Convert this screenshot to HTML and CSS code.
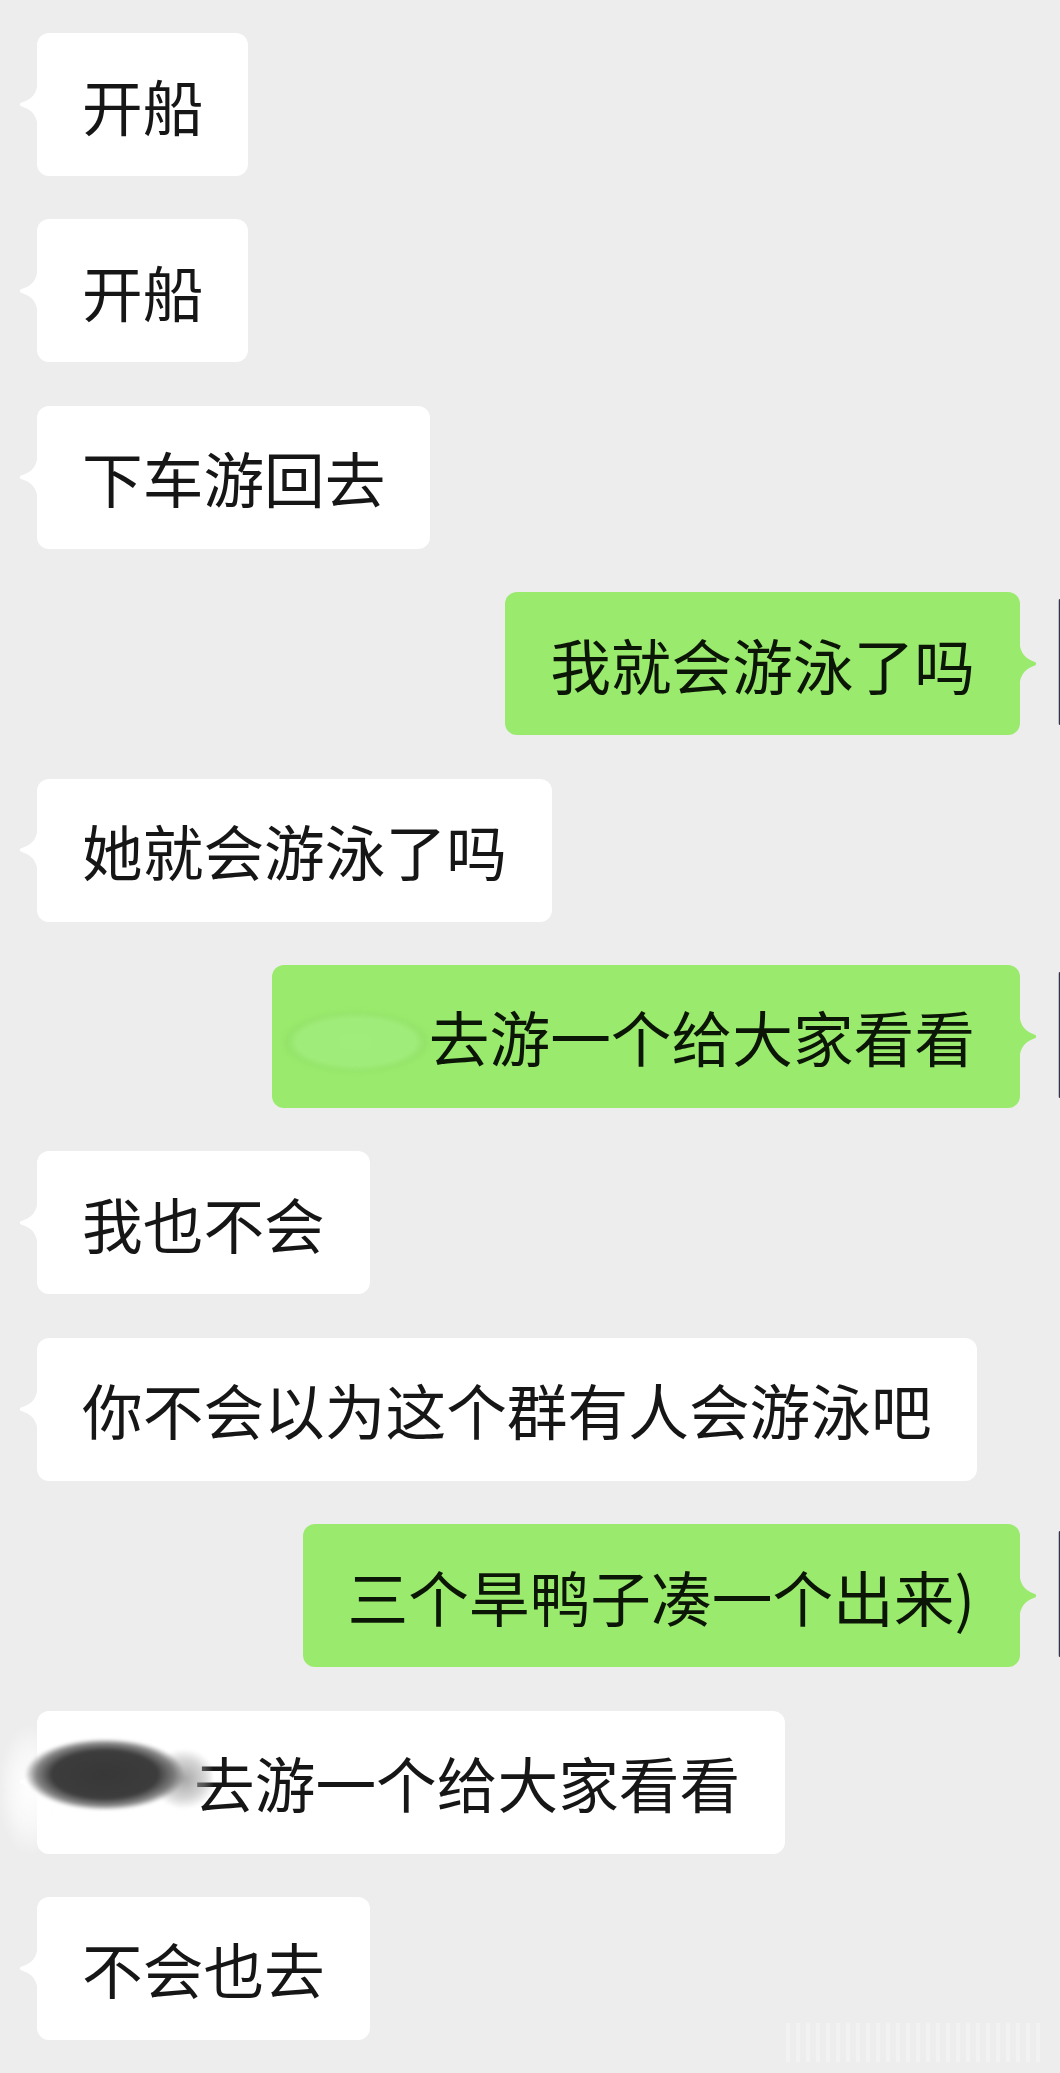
FILE: index.html
```html
<!DOCTYPE html>
<html lang="zh-CN">
<head>
    <meta charset="UTF-8">
    <meta name="viewport" content="width=device-width, initial-scale=1.0">
    <title>聊天记录</title>
    <link rel="stylesheet" href="styles.css">
</head>
<body>
    <div class="chat">
        <div class="row left"><div class="bubble">开船</div></div>
        <div class="row left"><div class="bubble">开船</div></div>
        <div class="row left"><div class="bubble">下车游回去</div></div>
        <div class="row right">
            <div class="bubble green">我就会游泳了吗</div>
            <div class="avatar"></div>
        </div>
        <div class="row left"><div class="bubble">她就会游泳了吗</div></div>
        <div class="row right">
            <div class="bubble green"><span class="masked light"></span>去游一个给大家看看</div>
            <div class="avatar"></div>
        </div>
        <div class="row left"><div class="bubble">我也不会</div></div>
        <div class="row left"><div class="bubble">你不会以为这个群有人会游泳吧</div></div>
        <div class="row right">
            <div class="bubble green">三个旱鸭子凑一个出来)</div>
            <div class="avatar"></div>
        </div>
        <div class="row left"><div class="bubble"><span class="masked dark"></span>去游一个给大家看看</div></div>
        <div class="row left"><div class="bubble">不会也去</div></div>
    </div>

    <!-- watermark in the bottom corner -->
    <div class="watermark"></div>
</body>
</html>
```

FILE: styles.css
```css
body {
    margin: 0;
    min-height: 2073px;
    position: relative;
    overflow: hidden;
    background-color: #ededed;
    font-family: "Noto Sans CJK SC", "Noto Sans", sans-serif;
}

.chat {
    display: flex;
    flex-direction: column;
    gap: 43.4px;
    padding: 33px 0 0 37px;
}

.row {
    display: flex;
}

.row.right {
    justify-content: flex-end;
}

.bubble {
    position: relative;
    background-color: #fff;
    color: #161616;
    border-radius: 12px;
    padding: 29.5px 45px;
    font-size: 60.7px;
    line-height: 84px;
    white-space: nowrap;
}

/* the little pointer on the side of each bubble */
.bubble::before {
    content: "";
    position: absolute;
    top: 50%;
    margin-top: -17.5px;
    height: 35px;
    background: inherit;
}

.row.left .bubble::before {
    left: -18px;
    width: 18px;
    clip-path: path('M18 0 C16 9 11 13 1.5 16 Q0 17.5 1.5 19 C11 22 16 26 18 35 Z');
}

.bubble.green {
    background-color: #9aea6d;
    color: #0c1607;
}

.row.right .bubble::before {
    right: -17px;
    width: 17px;
    clip-path: path('M0 0 C2 9 7 13 15.5 16 Q17 17.5 15.5 19 C7 22 2 26 0 35 Z');
}

/* edge of the avatar, cut off by the screenshot */
.avatar {
    width: 2px;
    height: 126px;
    margin-left: 38px;
    margin-top: 7px;
    border-radius: 2px 0 0 2px;
    background: linear-gradient(to right, #b9bdcc 0 1px, #323644 1px);
}

/* scribbled-out names */
.masked {
    display: inline-block;
    position: relative;
    width: 112px;
    height: 84px;
    vertical-align: top;
}

.masked.light::before {
    content: "";
    position: absolute;
    left: -36px;
    top: 17px;
    width: 150px;
    height: 62px;
    background: radial-gradient(closest-side, #a1ed7c 0, #a0ec7b 80%, rgba(130, 205, 92, 0.25) 91%, rgba(154, 234, 109, 0) 100%);
    filter: blur(2px);
}

.masked.dark::before {
    content: "";
    position: absolute;
    left: -92px;
    top: -20px;
    width: 64px;
    height: 134px;
    background: radial-gradient(ellipse 50% 50% at 62% 52%, rgba(255, 255, 255, 0.95) 0, rgba(255, 255, 255, 0.6) 55%, rgba(255, 255, 255, 0) 100%);
    filter: blur(3px);
}

.masked.dark::after {
    content: "";
    position: absolute;
    left: -58px;
    top: -3px;
    width: 188px;
    height: 75px;
    background:
        radial-gradient(ellipse 80px 36px at 43% 50%, #373737 0, #3c3c3c 66%, rgba(95, 95, 95, 0.75) 86%, rgba(130, 130, 130, 0) 100%),
        radial-gradient(ellipse 32px 30px at 85% 56%, rgba(150, 150, 150, 0.85) 0, rgba(165, 165, 165, 0.45) 65%, rgba(170, 170, 170, 0) 100%);
    filter: blur(1.5px);
}

.watermark {
    position: absolute;
    right: 16px;
    bottom: 11px;
    width: 258px;
    height: 39px;
    background: repeating-linear-gradient(90deg, rgba(255, 255, 255, 0.5) 0 4px, rgba(255, 255, 255, 0) 4px 10px);
    opacity: 0.5;
    filter: blur(0.6px);
}
```
